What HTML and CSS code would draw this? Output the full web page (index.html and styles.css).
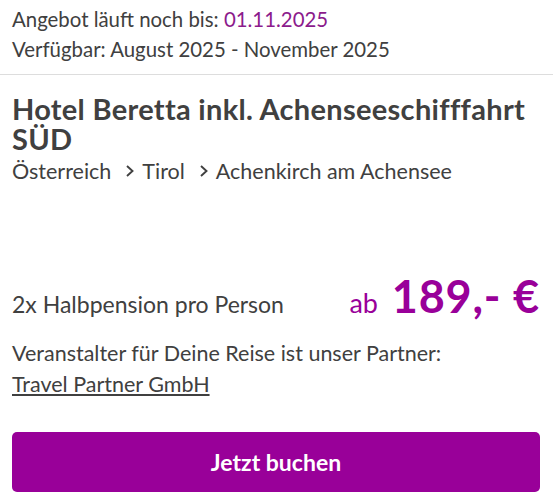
FILE: index.html
```html
<!DOCTYPE html>
<html lang="de">
  <head>
    <meta charset="UTF-8" />
    <meta name="viewport" content="width=device-width, initial-scale=1.0" />
    <title>Hotel Beretta</title>
    <link rel="stylesheet" href="styles.css">
  </head>
  <body>
    <div class="offer">
      <!-- Validity -->
      <div class="validity">
        <div>Angebot läuft noch bis: <span class="date">01.11.2025</span></div>
        <div>Verfügbar: August 2025 - November 2025</div>
      </div>

      <div class="details">
        <h2 class="title">Hotel Beretta inkl. Achenseeschifffahrt SÜD</h2>
        <div class="breadcrumb">
          <span>Österreich</span>
          <svg class="chevron" viewBox="0 0 8 12"><path d="M1 1 L6.5 6 L1 11" /></svg>
          <span>Tirol</span>
          <svg class="chevron" viewBox="0 0 8 12"><path d="M1 1 L6.5 6 L1 11" /></svg>
          <span>Achenkirch am Achensee</span>
        </div>

        <!-- Price -->
        <div class="price-row">
          <span class="board">2x Halbpension pro Person</span>
          <span class="price"><span class="from">ab</span> 189,- €</span>
        </div>

        <div class="partner">
          Veranstalter für Deine Reise ist unser Partner:<br />
          <a href="#">Travel Partner GmbH</a>
        </div>

        <button class="book">Jetzt buchen</button>
      </div>
    </div>
  </body>
</html>
```

FILE: styles.css
```css
body {
  margin: 0;
  background-color: white;
  color: #404040;
  font-family: Lato, "Noto Sans", sans-serif;
}
.validity {
  padding: 4px 13px 10px 12px;
  font-size: 20.4px;
  line-height: 30px;
  border-bottom: 1px solid #dddddd;
}
.date {
  color: #8c1b8c;
}
.details {
  padding: 19px 13px 0 12px;
}
.title {
  margin: 0;
  font-size: 29px;
  line-height: 30px;
  letter-spacing: 0.3px;
  font-weight: bold;
}
.breadcrumb {
  display: flex;
  align-items: center;
  gap: 8px;
  margin-top: 2px;
  font-size: 21.5px;
  line-height: 30px;
}
.chevron {
  width: 8px;
  height: 12px;
  margin-left: 7px;
  fill: none;
  stroke: #404040;
  stroke-width: 1.9;
}
.price-row {
  display: flex;
  justify-content: space-between;
  align-items: baseline;
  margin-top: 85px;
  font-size: 23px;
  line-height: 50px;
}
.price {
  color: #990099;
  font-size: 45px;
  letter-spacing: 0.8px;
  font-weight: bold;
}
.from {
  font-size: 27px;
  font-weight: normal;
  letter-spacing: 0;
  margin-right: 2px;
}
.partner {
  margin-top: 9px;
  font-size: 21.5px;
  line-height: 31px;
}
.partner a {
  color: #404040;
}
.book {
  display: block;
  width: 100%;
  height: 60px;
  margin-top: 32px;
  background-color: #990099;
  color: white;
  border: none;
  border-radius: 5px;
  font-family: inherit;
  font-size: 23px;
  font-weight: bold;
  cursor: pointer;
}
```
